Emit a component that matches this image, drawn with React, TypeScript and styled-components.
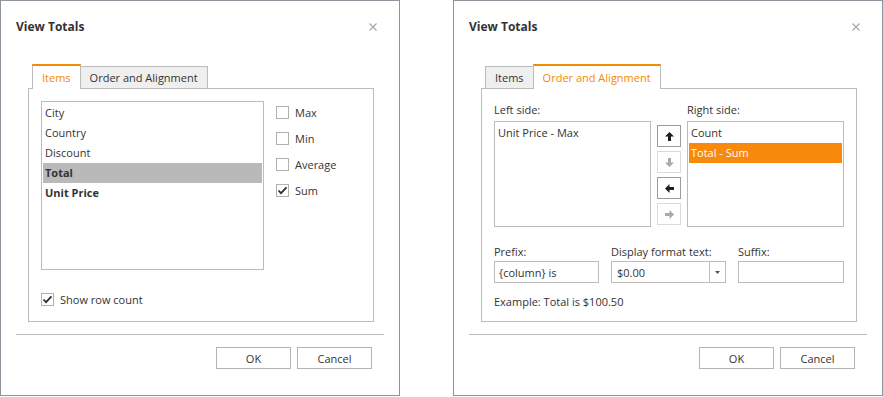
import React from 'react';
import styled, { createGlobalStyle } from 'styled-components';

const GlobalStyle = createGlobalStyle`
  html, body {
    margin: 0;
    padding: 0;
    background: #fff;
  }
  body {
    font-family: 'Open Sans', 'Noto Sans', sans-serif;
    font-size: 11px;
    color: #333;
  }
`;

const Page = styled.div`
  display: flex;
  align-items: flex-start;
  gap: 53px;
`;

const Dialog = styled.div<{ $width: number }>`
  box-sizing: border-box;
  width: ${(p) => p.$width}px;
  height: 396px;
  border: 1px solid #8d949c;
  background: #fff;
  display: flex;
  flex-direction: column;
`;

const Header = styled.div`
  height: 51px;
  padding: 0 22px 0 15px;
  display: flex;
  align-items: center;
  justify-content: space-between;
`;

const Title = styled.div`
  font-size: 12px;
  font-weight: 700;
  color: #333;
`;

const Body = styled.div`
  padding: 12px 25px 0 27px;
`;

const TabStrip = styled.div`
  display: flex;
  align-items: flex-end;
  padding-left: 4px;
  margin-bottom: -1px;
  position: relative;
`;

const Tab = styled.div<{ $active?: boolean }>`
  box-sizing: border-box;
  height: ${(p) => (p.$active ? 25 : 23)}px;
  padding: 0 9px;
  display: flex;
  align-items: center;
  font-size: 11px;
  border: 1px solid #bcbcbc;
  border-top: ${(p) => (p.$active ? '2px solid #f28c00' : '1px solid #bcbcbc')};
  border-bottom: ${(p) => (p.$active ? 'none' : '1px solid #bcbcbc')};
  background: ${(p) => (p.$active ? '#fff' : '#efefef')};
  color: ${(p) => (p.$active ? '#f28c00' : '#333')};
  position: relative;
  z-index: ${(p) => (p.$active ? 2 : 1)};
  & + & {
    margin-left: -1px;
  }
`;

const Panel = styled.div`
  box-sizing: border-box;
  height: 234px;
  border: 1px solid #bcbcbc;
  padding: 12px 12px 0 12px;
`;

const ItemsLayout = styled.div`
  display: flex;
  gap: 12px;
`;

const ListBox = styled.div<{ $width: number; $height: number }>`
  box-sizing: border-box;
  width: ${(p) => p.$width}px;
  height: ${(p) => p.$height}px;
  border: 1px solid #bcbcbc;
  padding: 1px;
  background: #fff;
`;

const ListItem = styled.div<{ $bold?: boolean; $selected?: 'grey' | 'orange' }>`
  height: 20px;
  line-height: 20px;
  padding-left: 2px;
  font-size: 11px;
  font-weight: ${(p) => (p.$bold ? 700 : 400)};
  background: ${(p) => (p.$selected === 'grey' ? '#b9b9b9' : p.$selected === 'orange' ? '#f7890c' : 'transparent')};
  color: ${(p) => (p.$selected === 'orange' ? '#fff' : '#333')};
  white-space: nowrap;
`;

const CheckColumn = styled.div`
  display: flex;
  flex-direction: column;
  padding-top: 5px;
`;

const CheckRow = styled.label`
  display: flex;
  align-items: center;
  gap: 6px;
  height: 13px;
  margin-bottom: 13px;
  font-size: 11px;
  color: #333;
`;

const Box = styled.span`
  box-sizing: border-box;
  width: 13px;
  height: 13px;
  border: 1px solid #b0b0b0;
  background: #fff;
  display: flex;
  align-items: center;
  justify-content: center;
  flex-shrink: 0;
`;

const RowCount = styled.div`
  margin-top: 23px;
`;

const SideLabel = styled.div`
  height: 16px;
  line-height: 16px;
  margin-bottom: 3px;
  font-size: 11px;
  color: #333;
`;

const OrderLayout = styled.div`
  display: flex;
  gap: 6px;
  margin-top: 1px;
`;

const SideColumn = styled.div`
  display: flex;
  flex-direction: column;
`;

const ArrowColumn = styled.div`
  display: flex;
  flex-direction: column;
  gap: 4px;
  padding-top: 23px;
`;

const ArrowButton = styled.div<{ $disabled?: boolean }>`
  box-sizing: border-box;
  width: 24px;
  height: 22px;
  border: 1px solid ${(p) => (p.$disabled ? '#dadada' : '#9d9d9d')};
  background: #fff;
  display: flex;
  align-items: center;
  justify-content: center;
  color: ${(p) => (p.$disabled ? '#a9a9a9' : '#1e1e1e')};
`;

const FieldsGrid = styled.div`
  display: grid;
  grid-template-columns: 105px 115px 106px;
  column-gap: 12px;
  margin-top: 17px;
`;

const FieldLabel = styled.div`
  height: 16px;
  line-height: 16px;
  margin-bottom: 1px;
  font-size: 11px;
  color: #333;
`;

const TextBox = styled.div`
  box-sizing: border-box;
  height: 22px;
  border: 1px solid #bcbcbc;
  padding-left: 4px;
  display: flex;
  align-items: center;
  font-size: 11px;
  color: #333;
`;

const ComboBox = styled(TextBox)`
  padding-left: 0;
`;

const ComboText = styled.div`
  flex: 1;
  padding-left: 5px;
`;

const ComboButton = styled.div`
  width: 15px;
  height: 100%;
  border-left: 1px solid #bcbcbc;
  display: flex;
  align-items: center;
  justify-content: center;
`;

const Example = styled.div`
  margin-top: 11px;
  height: 16px;
  line-height: 16px;
  font-size: 11px;
  color: #333;
`;

const Separator = styled.div`
  margin: 12px 15px 0;
  border-top: 1px solid #bcbcbc;
`;

const Footer = styled.div`
  display: flex;
  justify-content: flex-end;
  gap: 6px;
  padding: 12px 27px 0 0;
`;

const Button = styled.div`
  box-sizing: border-box;
  width: 75px;
  height: 22px;
  border: 1px solid #b4b4b4;
  background: #fff;
  display: flex;
  align-items: center;
  justify-content: center;
  font-size: 11px;
  color: #333;
`;

const CloseIcon = () => (
  <svg width="8" height="8" viewBox="0 0 8 8">
    <path d="M0.5 0.5 L7.5 7.5 M7.5 0.5 L0.5 7.5" stroke="#a5a5a5" strokeWidth="1.1" fill="none" />
  </svg>
);

const Check = () => (
  <svg width="11" height="11" viewBox="0 0 11 11">
    <polyline points="1.5,5.5 4,8.2 9.5,2.3" stroke="#2b2b2b" strokeWidth="1.7" fill="none" />
  </svg>
);

const Arrow = ({ dir }: { dir: 'up' | 'down' | 'left' | 'right' }) => {
  const rot = { up: 0, right: 90, down: 180, left: 270 }[dir];
  return (
    <svg width="9" height="9" viewBox="0 0 9 9">
      <polygon
        points="4.5,0 9,4.5 6,4.5 6,9 3,9 3,4.5 0,4.5"
        fill="currentColor"
        transform={`rotate(${rot} 4.5 4.5)`}
      />
    </svg>
  );
};

const CheckBox = ({ label, checked }: { label: string; checked?: boolean }) => (
  <CheckRow>
    <Box>{checked && <Check />}</Box>
    {label}
  </CheckRow>
);

const DialogHeader = () => (
  <Header>
    <Title>View Totals</Title>
    <CloseIcon />
  </Header>
);

const DialogFooter = () => (
  <>
    <Separator />
    <Footer>
      <Button>OK</Button>
      <Button>Cancel</Button>
    </Footer>
  </>
);

function ItemsDialog() {
  return (
    <Dialog $width={400}>
      <DialogHeader />
      <Body>
        <TabStrip>
          <Tab $active>Items</Tab>
          <Tab>Order and Alignment</Tab>
        </TabStrip>
        <Panel>
          <ItemsLayout>
            <ListBox $width={223} $height={169}>
              <ListItem>City</ListItem>
              <ListItem>Country</ListItem>
              <ListItem>Discount</ListItem>
              <ListItem $bold $selected="grey">Total</ListItem>
              <ListItem $bold>Unit Price</ListItem>
            </ListBox>
            <CheckColumn>
              <CheckBox label="Max" />
              <CheckBox label="Min" />
              <CheckBox label="Average" />
              <CheckBox label="Sum" checked />
            </CheckColumn>
          </ItemsLayout>
          <RowCount>
            <CheckBox label="Show row count" checked />
          </RowCount>
        </Panel>
      </Body>
      <DialogFooter />
    </Dialog>
  );
}

function OrderDialog() {
  return (
    <Dialog $width={430}>
      <DialogHeader />
      <Body>
        <TabStrip>
          <Tab>Items</Tab>
          <Tab $active>Order and Alignment</Tab>
        </TabStrip>
        <Panel>
          <OrderLayout>
            <SideColumn>
              <SideLabel>Left side:</SideLabel>
              <ListBox $width={157} $height={106}>
                <ListItem>Unit Price - Max</ListItem>
              </ListBox>
            </SideColumn>
            <ArrowColumn>
              <ArrowButton><Arrow dir="up" /></ArrowButton>
              <ArrowButton $disabled><Arrow dir="down" /></ArrowButton>
              <ArrowButton><Arrow dir="left" /></ArrowButton>
              <ArrowButton $disabled><Arrow dir="right" /></ArrowButton>
            </ArrowColumn>
            <SideColumn>
              <SideLabel>Right side:</SideLabel>
              <ListBox $width={157} $height={106}>
                <ListItem>Count</ListItem>
                <ListItem $selected="orange">Total - Sum</ListItem>
              </ListBox>
            </SideColumn>
          </OrderLayout>
          <FieldsGrid>
            <FieldLabel>Prefix:</FieldLabel>
            <FieldLabel>Display format text:</FieldLabel>
            <FieldLabel>Suffix:</FieldLabel>
            <TextBox>{'{column} is'}</TextBox>
            <ComboBox>
              <ComboText>$0.00</ComboText>
              <ComboButton>
                <svg width="5" height="3" viewBox="0 0 5 3">
                  <polygon points="0,0 5,0 2.5,3" fill="#555" />
                </svg>
              </ComboButton>
            </ComboBox>
            <TextBox />
          </FieldsGrid>
          <Example>Example: Total is $100.50</Example>
        </Panel>
      </Body>
      <DialogFooter />
    </Dialog>
  );
}

export default function App() {
  return (
    <>
      <GlobalStyle />
      <Page>
        <ItemsDialog />
        <OrderDialog />
      </Page>
    </>
  );
}
